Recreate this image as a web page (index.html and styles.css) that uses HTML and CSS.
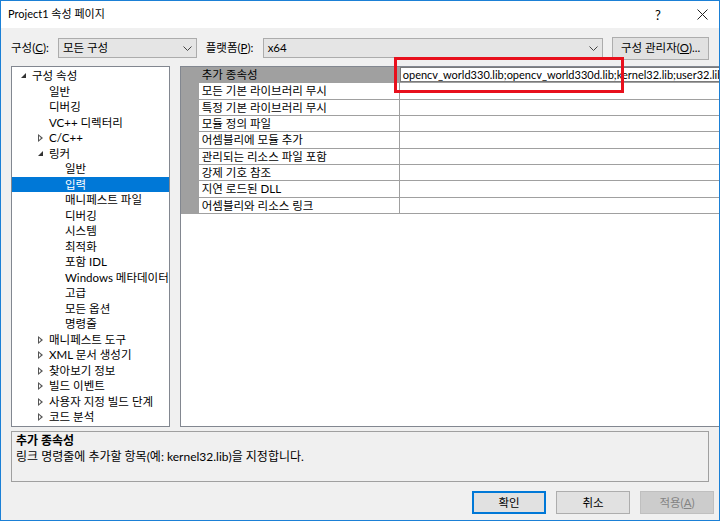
FILE: index.html
```html
<!DOCTYPE html>
<html lang="ko">
<head>
  <meta charset="UTF-8" />
  <title>Project1 속성 페이지</title>
  <link rel="stylesheet" href="styles.css">
</head>
<body>
  <div class="window">
    <div class="titlebar">
      <span class="title">Project1 속성 페이지</span>
      <span class="help">?</span>
      <span class="close">
        <svg width="11" height="11" viewBox="0 0 11 11"><path d="M0.5 0.5 L10.5 10.5 M10.5 0.5 L0.5 10.5" stroke="#222" stroke-width="1" fill="none"/></svg>
      </span>
    </div>

    <div class="content">
      <div class="config-row">
        <span class="lbl lbl-config">구성(<u>C</u>):</span>
        <div class="combo combo-config">
          <span>모든 구성</span>
          <svg class="chev" width="9" height="5" viewBox="0 0 9 5"><polyline points="0.5,0.5 4.5,4.5 8.5,0.5" stroke="#444" fill="none"/></svg>
        </div>
        <span class="lbl lbl-platform">플랫폼(<u>P</u>):</span>
        <div class="combo combo-platform">
          <span>x64</span>
          <svg class="chev" width="9" height="5" viewBox="0 0 9 5"><polyline points="0.5,0.5 4.5,4.5 8.5,0.5" stroke="#444" fill="none"/></svg>
        </div>
        <button class="btn btn-manager">구성 관리자(<u>O</u>)...</button>
      </div>

      <div class="main">
        <ul class="tree">
          <li class="lvl0"><span class="arr open"></span>구성 속성</li>
          <li class="lvl1"><span class="arr"></span>일반</li>
          <li class="lvl1"><span class="arr"></span>디버깅</li>
          <li class="lvl1"><span class="arr"></span>VC++ 디렉터리</li>
          <li class="lvl1"><span class="arr shut"></span>C/C++</li>
          <li class="lvl1"><span class="arr open"></span>링커</li>
          <li class="lvl2"><span class="arr"></span>일반</li>
          <li class="lvl2 selected"><span class="arr"></span>입력</li>
          <li class="lvl2"><span class="arr"></span>매니페스트 파일</li>
          <li class="lvl2"><span class="arr"></span>디버깅</li>
          <li class="lvl2"><span class="arr"></span>시스템</li>
          <li class="lvl2"><span class="arr"></span>최적화</li>
          <li class="lvl2"><span class="arr"></span>포함 IDL</li>
          <li class="lvl2"><span class="arr"></span>Windows 메타데이터</li>
          <li class="lvl2"><span class="arr"></span>고급</li>
          <li class="lvl2"><span class="arr"></span>모든 옵션</li>
          <li class="lvl2"><span class="arr"></span>명령줄</li>
          <li class="lvl1"><span class="arr shut"></span>매니페스트 도구</li>
          <li class="lvl1"><span class="arr shut"></span>XML 문서 생성기</li>
          <li class="lvl1"><span class="arr shut"></span>찾아보기 정보</li>
          <li class="lvl1"><span class="arr shut"></span>빌드 이벤트</li>
          <li class="lvl1"><span class="arr shut"></span>사용자 지정 빌드 단계</li>
          <li class="lvl1"><span class="arr shut"></span>코드 분석</li>
        </ul>

        <div class="grid">
          <div class="row current">
            <div class="gutter"></div>
            <div class="name">추가 종속성</div>
            <div class="value"><div class="edit">opencv_world330.lib;opencv_world330d.lib;kernel32.lib;user32.lib;gdi32.lib;winspool.lib</div></div>
          </div>
          <div class="row"><div class="gutter"></div><div class="name">모든 기본 라이브러리 무시</div><div class="value"></div></div>
          <div class="row"><div class="gutter"></div><div class="name">특정 기본 라이브러리 무시</div><div class="value"></div></div>
          <div class="row"><div class="gutter"></div><div class="name">모듈 정의 파일</div><div class="value"></div></div>
          <div class="row"><div class="gutter"></div><div class="name">어셈블리에 모듈 추가</div><div class="value"></div></div>
          <div class="row"><div class="gutter"></div><div class="name">관리되는 리소스 파일 포함</div><div class="value"></div></div>
          <div class="row"><div class="gutter"></div><div class="name">강제 기호 참조</div><div class="value"></div></div>
          <div class="row"><div class="gutter"></div><div class="name">지연 로드된 DLL</div><div class="value"></div></div>
          <div class="row"><div class="gutter"></div><div class="name">어셈블리와 리소스 링크</div><div class="value"></div></div>
        </div>
      </div>

      <div class="desc">
        <div class="desc-title">추가 종속성</div>
        <div class="desc-text">링크 명령줄에 추가할 항목(예: kernel32.lib)을 지정합니다.</div>
      </div>

      <div class="buttons">
        <button class="btn btn-ok">확인</button>
        <button class="btn">취소</button>
        <button class="btn btn-disabled">적용(<u>A</u>)</button>
      </div>
    </div>

    <div class="highlight"></div>
  </div>
</body>
</html>
```

FILE: styles.css
```css
html, body {
  margin: 0;
  padding: 0;
  background-color: #f0f0f0;
}

body {
  font-family: Lato, "Noto Sans CJK KR", sans-serif;
  font-size: 11.5px;
  color: #000;
}

.window {
  position: relative;
  width: 720px;
  height: 521px;
  box-sizing: border-box;
  border: 1px solid #1b80d6;
  display: flex;
  flex-direction: column;
  overflow: hidden;
}

.titlebar {
  height: 27px;
  background-color: #fff;
  display: flex;
  align-items: center;
  padding-left: 7px;
  flex-shrink: 0;
}

.title {
  flex: 1;
  font-size: 11px;
  line-height: 16px;
  margin-top: -1px;
}

.help {
  font-size: 13px;
  width: 20px;
  margin-right: 22px;
}

.close {
  width: 11px;
  margin-right: 11px;
  display: flex;
}

.content {
  flex: 1;
  background-color: #f0f0f0;
  display: flex;
  flex-direction: column;
  padding: 0 10px 6px 10px;
}

/* config row */
.config-row {
  margin-top: 9px;
  height: 22px;
  display: flex;
  align-items: center;
}

.lbl {
  line-height: 16px;
}

.lbl-config {
  width: 47px;
}

.lbl-platform {
  width: 57px;
  margin-left: 9px;
}

.combo {
  height: 20px;
  box-sizing: border-box;
  background-color: #e5e5e5;
  border: 1px solid #acacac;
  display: flex;
  align-items: center;
  padding: 0 4px 0 4px;
  line-height: 16px;
}

.combo span {
  flex: 1;
}

.combo-config {
  width: 139px;
}

.combo-platform {
  width: 341px;
}

.chev {
  display: block;
  margin-top: 1px;
}

.btn {
  font-family: inherit;
  font-size: 11.5px;
  color: #000;
  background-color: #e1e1e1;
  border: 1px solid #adadad;
  padding: 0;
  height: 23px;
  line-height: 16px;
}

.btn-manager {
  margin-left: 9px;
  width: 97px;
}

/* main area */
.main {
  margin-top: 7px;
  height: 361px;
  display: flex;
  gap: 10px;
}

.tree {
  list-style: none;
  margin: 0;
  padding: 1px 0 0 0;
  width: 160px;
  box-sizing: border-box;
  background-color: #fff;
  border: 1px solid #828790;
}

.tree li {
  height: 15.5px;
  line-height: 15.5px;
  display: flex;
  align-items: center;
  white-space: nowrap;
}

.tree .lvl0 { padding-left: 8px; }
.tree .lvl1 { padding-left: 25px; }
.tree .lvl2 { padding-left: 41px; }

.tree li.selected {
  background-color: #0078d7;
  color: #fff;
}

.arr {
  width: 12px;
  height: 15px;
  flex-shrink: 0;
  position: relative;
}

/* expanded node: small filled corner triangle */
.arr.open::after {
  content: "";
  position: absolute;
  left: 1px;
  top: 5px;
  width: 0;
  height: 0;
  border-left: 5px solid transparent;
  border-bottom: 5px solid #333;
}

/* collapsed node: hollow right-pointing triangle */
.arr.shut::before,
.arr.shut::after {
  content: "";
  position: absolute;
  width: 0;
  height: 0;
  border-top: 4px solid transparent;
  border-bottom: 4px solid transparent;
}

.arr.shut::before {
  left: 1px;
  top: 4px;
  border-left: 5px solid #555;
}

.arr.shut::after {
  left: 2px;
  top: 6px;
  border-top-width: 2px;
  border-bottom-width: 2px;
  border-left: 2.5px solid #fff;
}

.grid {
  flex: 1;
  background-color: #fff;
  border: 1px solid #828790;
  display: flex;
  flex-direction: column;
}

.row {
  display: flex;
  height: 16.33px;
  flex-shrink: 0;
}

.gutter {
  width: 18px;
  background-color: #a0a0a0;
  flex-shrink: 0;
}

.name {
  width: 201px;
  box-sizing: border-box;
  border-right: 1px solid #a0a0a0;
  border-bottom: 1px solid #a0a0a0;
  padding-left: 3px;
  line-height: 15px;
  white-space: nowrap;
  overflow: hidden;
}

.row.current .name {
  background-color: #a0a0a0;
}

.value {
  flex: 1;
  box-sizing: border-box;
  border-bottom: 1px solid #a0a0a0;
  overflow: hidden;
}

.edit {
  height: 100%;
  box-sizing: border-box;
  border: 1px solid #7a7a7a;
  border-right: none;
  padding-left: 2px;
  font-size: 11px;
  line-height: 14px;
  white-space: nowrap;
  overflow: hidden;
}

/* description */
.desc {
  margin-top: 4px;
  height: 51px;
  box-sizing: border-box;
  border: 1px solid #a0a0a0;
  padding: 1px 4px;
  font-size: 12px;
  line-height: 16px;
}

.desc-title {
  font-weight: bold;
}

/* bottom buttons */
.buttons {
  margin-top: 9px;
  margin-right: -5px;
  display: flex;
  justify-content: flex-end;
  gap: 10px;
}

.buttons .btn {
  width: 74px;
}

.btn-ok {
  border: 2px solid #0078d7;
}

.btn-disabled {
  background-color: #cccccc;
  border-color: #bfbfbf;
  color: #838383;
}

.highlight {
  position: absolute;
  left: 393px;
  top: 56px;
  width: 230px;
  height: 36px;
  box-sizing: border-box;
  border: 3px solid #e8101c;
  pointer-events: none;
}
```
